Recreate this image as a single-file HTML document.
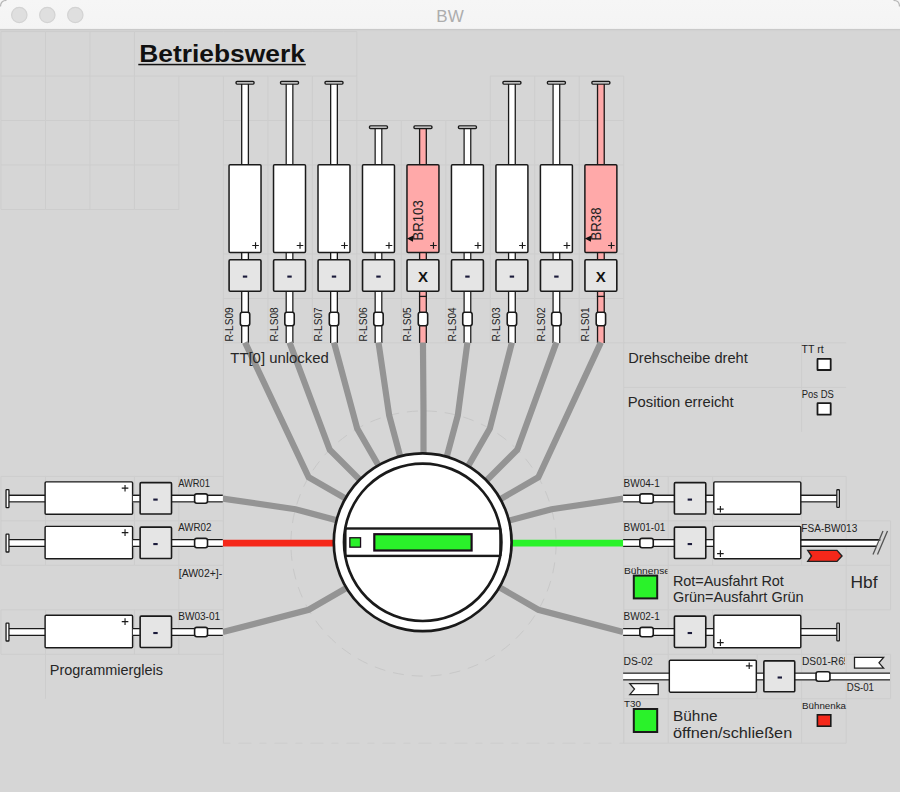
<!DOCTYPE html>
<html><head><meta charset="utf-8"><title>BW</title>
<style>html,body{margin:0;padding:0;background:#d6d6d6;width:900px;height:792px;overflow:hidden}svg{display:block;font-family:"Liberation Sans",sans-serif}</style>
</head><body>
<svg width="900" height="792" viewBox="0 0 900 792" font-family="Liberation Sans, sans-serif">
<rect x="0" y="0" width="900" height="792" fill="#d6d6d6"/>
<defs><linearGradient id="tb" x1="0" y1="0" x2="0" y2="1"><stop offset="0" stop-color="#f6f6f6"/><stop offset="1" stop-color="#f4f4f4"/></linearGradient></defs>
<rect x="0" y="0" width="900" height="29" fill="url(#tb)"/>
<rect x="0" y="28.9" width="900" height="1.3" fill="#c9c9c9"/>
<path d="M0.5 6.5Q0.5 0.5 6.5 0.5M893.5 0.5Q899.5 0.5 899.5 6.5" fill="none" stroke="#b8b8b8" stroke-width="1.2"/>
<rect x="0" y="30.2" width="900" height="1" fill="#d1d1d1"/>
<circle cx="19.3" cy="15" r="7.7" fill="#dfdfdf" stroke="#d3d3d3" stroke-width="1.2"/>
<circle cx="47.3" cy="15" r="7.7" fill="#dfdfdf" stroke="#d3d3d3" stroke-width="1.2"/>
<circle cx="75.3" cy="15" r="7.7" fill="#dfdfdf" stroke="#d3d3d3" stroke-width="1.2"/>
<text x="450" y="21.6" font-size="17" font-weight="normal" fill="#adadad" text-anchor="middle">BW</text>
<path d="M1 120.51H45.48M1 120.51V164.99M1 164.99H45.48M1 164.99V209.47M1 209.47H45.48M1 31.55H45.48M1 31.55V76.03M1 476.35H45.48M1 476.35V520.83M1 520.83H45.48M1 520.83V565.31M1 565.31H45.48M1 609.79H45.48M1 609.79V654.27M1 654.27H45.48M1 76.03H45.48M1 76.03V120.51M134.44 120.51H178.92M134.44 120.51V164.99M134.44 164.99H178.92M134.44 164.99V209.47M134.44 209.47H178.92M134.44 31.55H178.92M134.44 31.55V76.03M134.44 476.35H178.92M134.44 476.35V520.83M134.44 520.83H178.92M134.44 520.83V565.31M134.44 565.31H178.92M134.44 609.79H178.92M134.44 609.79V654.27M134.44 654.27H178.92M134.44 76.03H178.92M134.44 76.03V120.51M178.92 120.51V164.99M178.92 164.99V209.47M178.92 31.55H223.4M178.92 476.35H223.4M178.92 476.35V520.83M178.92 520.83H223.4M178.92 520.83V565.31M178.92 565.31H223.4M178.92 565.31V609.79M178.92 609.79H223.4M178.92 609.79V654.27M178.92 654.27H223.4M178.92 76.03H223.4M178.92 76.03V120.51M223.4 120.51H267.88M223.4 120.51V164.99M223.4 164.99H267.88M223.4 164.99V209.47M223.4 209.47V253.95M223.4 253.95H267.88M223.4 253.95V298.43M223.4 298.43H267.88M223.4 298.43V342.91M223.4 31.55H267.88M223.4 342.91H267.88M223.4 476.35V520.83M223.4 520.83V565.31M223.4 565.31V609.79M223.4 609.79V654.27M223.4 76.03H267.88M223.4 76.03V120.51M267.88 120.51H312.36M267.88 120.51V164.99M267.88 164.99H312.36M267.88 164.99V209.47M267.88 209.47V253.95M267.88 253.95H312.36M267.88 253.95V298.43M267.88 298.43H312.36M267.88 298.43V342.91M267.88 31.55H312.36M267.88 342.91H312.36M267.88 76.03H312.36M267.88 76.03V120.51M312.36 120.51H356.84M312.36 120.51V164.99M312.36 164.99H356.84M312.36 164.99V209.47M312.36 209.47V253.95M312.36 253.95H356.84M312.36 253.95V298.43M312.36 298.43H356.84M312.36 298.43V342.91M312.36 31.55H356.84M312.36 342.91H356.84M312.36 76.03H356.84M312.36 76.03V120.51M356.84 120.51H401.32M356.84 120.51V164.99M356.84 164.99H401.32M356.84 164.99V209.47M356.84 209.47V253.95M356.84 253.95H401.32M356.84 253.95V298.43M356.84 298.43H401.32M356.84 298.43V342.91M356.84 31.55V76.03M356.84 342.91H401.32M356.84 76.03V120.51M401.32 120.51H445.8M401.32 120.51V164.99M401.32 164.99H445.8M401.32 164.99V209.47M401.32 209.47V253.95M401.32 253.95H445.8M401.32 253.95V298.43M401.32 298.43H445.8M401.32 298.43V342.91M401.32 342.91H445.8M445.8 120.51H490.28M445.8 120.51V164.99M445.8 164.99H490.28M445.8 164.99V209.47M445.8 209.47V253.95M445.8 253.95H490.28M445.8 253.95V298.43M445.8 298.43H490.28M445.8 298.43V342.91M445.8 342.91H490.28M45.48 120.51H89.96M45.48 120.51V164.99M45.48 164.99H89.96M45.48 164.99V209.47M45.48 209.47H89.96M45.48 31.55H89.96M45.48 31.55V76.03M45.48 476.35H89.96M45.48 476.35V520.83M45.48 520.83H89.96M45.48 520.83V565.31M45.48 565.31H89.96M45.48 609.79H89.96M45.48 609.79V654.27M45.48 654.27H89.96M45.48 654.27V698.75M45.48 76.03H89.96M45.48 76.03V120.51M490.28 120.51H534.76M490.28 120.51V164.99M490.28 164.99H534.76M490.28 164.99V209.47M490.28 209.47V253.95M490.28 253.95H534.76M490.28 253.95V298.43M490.28 298.43H534.76M490.28 298.43V342.91M490.28 342.91H534.76M490.28 76.03H534.76M490.28 76.03V120.51M534.76 120.51H579.24M534.76 120.51V164.99M534.76 164.99H579.24M534.76 164.99V209.47M534.76 209.47V253.95M534.76 253.95H579.24M534.76 253.95V298.43M534.76 298.43H579.24M534.76 298.43V342.91M534.76 342.91H579.24M534.76 76.03H579.24M534.76 76.03V120.51M579.24 120.51H623.72M579.24 120.51V164.99M579.24 164.99H623.72M579.24 164.99V209.47M579.24 209.47V253.95M579.24 253.95H623.72M579.24 253.95V298.43M579.24 298.43H623.72M579.24 298.43V342.91M579.24 342.91H623.72M579.24 76.03H623.72M579.24 76.03V120.51M623.72 120.51V164.99M623.72 164.99V209.47M623.72 209.47V253.95M623.72 253.95V298.43M623.72 298.43V342.91M623.72 342.91H846.12M623.72 387.39H846.12M623.72 476.35H668.2M623.72 476.35V520.83M623.72 520.83H668.2M623.72 520.83V565.31M623.72 565.31H668.2M623.72 565.31V609.79M623.72 609.79H668.2M623.72 609.79V654.27M623.72 654.27H668.2M623.72 654.27V698.75M623.72 698.75H668.2M623.72 698.75V743.23M623.72 743.23H668.2M623.72 76.03V120.51M668.2 476.35H712.68M668.2 476.35V520.83M668.2 520.83H712.68M668.2 520.83V565.31M668.2 565.31H712.68M668.2 565.31V609.79M668.2 609.79H712.68M668.2 609.79V654.27M668.2 654.27H712.68M668.2 654.27V698.75M668.2 698.75H712.68M668.2 698.75V743.23M668.2 743.23H712.68M712.68 476.35H757.16M712.68 476.35V520.83M712.68 520.83H757.16M712.68 520.83V565.31M712.68 565.31H757.16M712.68 609.79H757.16M712.68 609.79V654.27M712.68 654.27H757.16M712.68 698.75H757.16M712.68 743.23H757.16M757.16 476.35H801.64M757.16 520.83H801.64M757.16 565.31H801.64M757.16 609.79H801.64M757.16 654.27H801.64M757.16 654.27V698.75M757.16 698.75H801.64M757.16 743.23H801.64M801.64 342.91V431.87M801.64 476.35H846.12M801.64 476.35V520.83M801.64 520.83H846.12M801.64 520.83V565.31M801.64 565.31H846.12M801.64 609.79H846.12M801.64 609.79V654.27M801.64 654.27H846.12M801.64 654.27V698.75M801.64 698.75H846.12M801.64 698.75V743.23M801.64 743.23H846.12M846.12 476.35V520.83M846.12 520.83H890.6M846.12 520.83V565.31M846.12 565.31H890.6M846.12 565.31V609.79M846.12 609.79H890.6M846.12 609.79V654.27M846.12 654.27H890.6M846.12 654.27V698.75M846.12 698.75H890.6M846.12 698.75V743.23M89.96 120.51H134.44M89.96 120.51V164.99M89.96 164.99H134.44M89.96 164.99V209.47M89.96 209.47H134.44M89.96 31.55H134.44M89.96 31.55V76.03M89.96 476.35H134.44M89.96 520.83H134.44M89.96 565.31H134.44M89.96 609.79H134.44M89.96 654.27H134.44M89.96 76.03H134.44M89.96 76.03V120.51M890.6 520.83V565.31M890.6 565.31V609.79M890.6 654.27V698.75" stroke="#cdcdcd" stroke-width="1" fill="none"/>
<path d="M223.4 298.43V743.23" stroke="#cdcdcd" stroke-width="1"/>
<path d="M623.72 342.91V743.23" stroke="#cdcdcd" stroke-width="1"/>
<path d="M223.4 743.23H623.72" stroke="#cdcdcd" stroke-width="1" stroke-dasharray="7 8 13 8" stroke-dashoffset="0"/>
<text x="139.3" y="62" font-size="24.2" font-weight="bold" fill="#111" textLength="165.5" lengthAdjust="spacingAndGlyphs">Betriebswerk</text>
<rect x="138.3" y="63.8" width="167.5" height="1.5" fill="#111"/>
<rect x="241.04" y="83.8" width="8" height="81.2" fill="#fff"/>
<path d="M241.69 83.8V165M248.39 83.8V165" stroke="#1a1a1a" stroke-width="1.3"/>
<rect x="236.04" y="81.5" width="18" height="2.6" rx="1" fill="#f4f4f4" stroke="#1a1a1a" stroke-width="1.4"/>
<rect x="241.04" y="252" width="8" height="8" fill="#fff"/>
<path d="M241.69 252V260M248.39 252V260" stroke="#1a1a1a" stroke-width="1.3"/>
<rect x="241.04" y="291" width="8" height="51.91" fill="#fff"/>
<path d="M241.69 291V342.91M248.39 291V342.91" stroke="#1a1a1a" stroke-width="1.3"/>
<rect x="229.05" y="164.75" width="31.98" height="87.7" rx="1.1" fill="#fff" stroke="#1a1a1a" stroke-width="1.5"/>
<path d="M252.24 245.5H258.84M255.54 242.2V248.8" stroke="#1a1a1a" stroke-width="1.15"/>
<rect x="229.1" y="259.8" width="31.88" height="31.4" rx="1.1" fill="#e5e5e5" stroke="#1a1a1a" stroke-width="1.6"/>
<rect x="242.84" y="275.55" width="4.4" height="2.1" fill="#1a1a3a"/>
<rect x="240.34" y="312.3" width="9.4" height="13.4" rx="2.2" fill="#fff" stroke="#1a1a1a" stroke-width="1.6"/>
<text transform="translate(233.3 341.6) rotate(-90)" font-size="10.2" fill="#222" textLength="34.2" lengthAdjust="spacingAndGlyphs">R-LS09</text>
<rect x="285.52" y="83.8" width="8" height="81.2" fill="#fff"/>
<path d="M286.17 83.8V165M292.87 83.8V165" stroke="#1a1a1a" stroke-width="1.3"/>
<rect x="280.52" y="81.5" width="18" height="2.6" rx="1" fill="#f4f4f4" stroke="#1a1a1a" stroke-width="1.4"/>
<rect x="285.52" y="252" width="8" height="8" fill="#fff"/>
<path d="M286.17 252V260M292.87 252V260" stroke="#1a1a1a" stroke-width="1.3"/>
<rect x="285.52" y="291" width="8" height="51.91" fill="#fff"/>
<path d="M286.17 291V342.91M292.87 291V342.91" stroke="#1a1a1a" stroke-width="1.3"/>
<rect x="273.53" y="164.75" width="31.98" height="87.7" rx="1.1" fill="#fff" stroke="#1a1a1a" stroke-width="1.5"/>
<path d="M296.72 245.5H303.32M300.02 242.2V248.8" stroke="#1a1a1a" stroke-width="1.15"/>
<rect x="273.58" y="259.8" width="31.88" height="31.4" rx="1.1" fill="#e5e5e5" stroke="#1a1a1a" stroke-width="1.6"/>
<rect x="287.32" y="275.55" width="4.4" height="2.1" fill="#1a1a3a"/>
<rect x="284.82" y="312.3" width="9.4" height="13.4" rx="2.2" fill="#fff" stroke="#1a1a1a" stroke-width="1.6"/>
<text transform="translate(277.78 341.6) rotate(-90)" font-size="10.2" fill="#222" textLength="34.2" lengthAdjust="spacingAndGlyphs">R-LS08</text>
<rect x="330" y="83.8" width="8" height="81.2" fill="#fff"/>
<path d="M330.65 83.8V165M337.35 83.8V165" stroke="#1a1a1a" stroke-width="1.3"/>
<rect x="325" y="81.5" width="18" height="2.6" rx="1" fill="#f4f4f4" stroke="#1a1a1a" stroke-width="1.4"/>
<rect x="330" y="252" width="8" height="8" fill="#fff"/>
<path d="M330.65 252V260M337.35 252V260" stroke="#1a1a1a" stroke-width="1.3"/>
<rect x="330" y="291" width="8" height="51.91" fill="#fff"/>
<path d="M330.65 291V342.91M337.35 291V342.91" stroke="#1a1a1a" stroke-width="1.3"/>
<rect x="318.01" y="164.75" width="31.98" height="87.7" rx="1.1" fill="#fff" stroke="#1a1a1a" stroke-width="1.5"/>
<path d="M341.2 245.5H347.8M344.5 242.2V248.8" stroke="#1a1a1a" stroke-width="1.15"/>
<rect x="318.06" y="259.8" width="31.88" height="31.4" rx="1.1" fill="#e5e5e5" stroke="#1a1a1a" stroke-width="1.6"/>
<rect x="331.8" y="275.55" width="4.4" height="2.1" fill="#1a1a3a"/>
<rect x="329.3" y="312.3" width="9.4" height="13.4" rx="2.2" fill="#fff" stroke="#1a1a1a" stroke-width="1.6"/>
<text transform="translate(322.26 341.6) rotate(-90)" font-size="10.2" fill="#222" textLength="34.2" lengthAdjust="spacingAndGlyphs">R-LS07</text>
<rect x="374.48" y="128.2" width="8" height="36.8" fill="#fff"/>
<path d="M375.13 128.2V165M381.83 128.2V165" stroke="#1a1a1a" stroke-width="1.3"/>
<rect x="369.48" y="125.9" width="18" height="2.6" rx="1" fill="#f4f4f4" stroke="#1a1a1a" stroke-width="1.4"/>
<rect x="374.48" y="252" width="8" height="8" fill="#fff"/>
<path d="M375.13 252V260M381.83 252V260" stroke="#1a1a1a" stroke-width="1.3"/>
<rect x="374.48" y="291" width="8" height="51.91" fill="#fff"/>
<path d="M375.13 291V342.91M381.83 291V342.91" stroke="#1a1a1a" stroke-width="1.3"/>
<rect x="362.49" y="164.75" width="31.98" height="87.7" rx="1.1" fill="#fff" stroke="#1a1a1a" stroke-width="1.5"/>
<path d="M385.68 245.5H392.28M388.98 242.2V248.8" stroke="#1a1a1a" stroke-width="1.15"/>
<rect x="362.54" y="259.8" width="31.88" height="31.4" rx="1.1" fill="#e5e5e5" stroke="#1a1a1a" stroke-width="1.6"/>
<rect x="376.28" y="275.55" width="4.4" height="2.1" fill="#1a1a3a"/>
<rect x="373.78" y="312.3" width="9.4" height="13.4" rx="2.2" fill="#fff" stroke="#1a1a1a" stroke-width="1.6"/>
<text transform="translate(366.74 341.6) rotate(-90)" font-size="10.2" fill="#222" textLength="34.2" lengthAdjust="spacingAndGlyphs">R-LS06</text>
<rect x="418.96" y="128.2" width="8" height="36.8" fill="#ffa9a9"/>
<path d="M419.61 128.2V165M426.31 128.2V165" stroke="#1a1a1a" stroke-width="1.3"/>
<rect x="413.96" y="125.9" width="18" height="2.6" rx="1" fill="#f4f4f4" stroke="#1a1a1a" stroke-width="1.4"/>
<rect x="418.96" y="252" width="8" height="8" fill="#ffa9a9"/>
<path d="M419.61 252V260M426.31 252V260" stroke="#1a1a1a" stroke-width="1.3"/>
<rect x="418.96" y="291" width="8" height="51.91" fill="#ffa9a9"/>
<path d="M419.61 291V342.91M426.31 291V342.91" stroke="#1a1a1a" stroke-width="1.3"/>
<rect x="406.97" y="164.75" width="31.98" height="87.7" rx="1.1" fill="#ffa9a9" stroke="#1a1a1a" stroke-width="1.5"/>
<path d="M430.16 245.5H436.76M433.46 242.2V248.8" stroke="#1a1a1a" stroke-width="1.15"/>
<rect x="407.02" y="259.8" width="31.88" height="31.4" rx="1.1" fill="#e5e5e5" stroke="#1a1a1a" stroke-width="1.6"/>
<text x="422.96" y="282" font-size="15" font-weight="bold" fill="#111" text-anchor="middle">X</text>
<path d="M418.96 296.4H426.96" stroke="#1a1a1a" stroke-width="1.3"/>
<rect x="418.26" y="312.3" width="9.4" height="13.4" rx="2.2" fill="#fff" stroke="#1a1a1a" stroke-width="1.6"/>
<text transform="translate(411.22 341.6) rotate(-90)" font-size="10.2" fill="#222" textLength="34.2" lengthAdjust="spacingAndGlyphs">R-LS05</text>
<text transform="translate(423.46 240.5) rotate(-90)" font-size="14.2" fill="#222" textLength="40.2" lengthAdjust="spacingAndGlyphs">BR103</text>
<path d="M406.96 238.5L413.46 235.5L412.96 241.8Z" fill="#111"/>
<rect x="463.44" y="128.2" width="8" height="36.8" fill="#fff"/>
<path d="M464.09 128.2V165M470.79 128.2V165" stroke="#1a1a1a" stroke-width="1.3"/>
<rect x="458.44" y="125.9" width="18" height="2.6" rx="1" fill="#f4f4f4" stroke="#1a1a1a" stroke-width="1.4"/>
<rect x="463.44" y="252" width="8" height="8" fill="#fff"/>
<path d="M464.09 252V260M470.79 252V260" stroke="#1a1a1a" stroke-width="1.3"/>
<rect x="463.44" y="291" width="8" height="51.91" fill="#fff"/>
<path d="M464.09 291V342.91M470.79 291V342.91" stroke="#1a1a1a" stroke-width="1.3"/>
<rect x="451.45" y="164.75" width="31.98" height="87.7" rx="1.1" fill="#fff" stroke="#1a1a1a" stroke-width="1.5"/>
<path d="M474.64 245.5H481.24M477.94 242.2V248.8" stroke="#1a1a1a" stroke-width="1.15"/>
<rect x="451.5" y="259.8" width="31.88" height="31.4" rx="1.1" fill="#e5e5e5" stroke="#1a1a1a" stroke-width="1.6"/>
<rect x="465.24" y="275.55" width="4.4" height="2.1" fill="#1a1a3a"/>
<rect x="462.74" y="312.3" width="9.4" height="13.4" rx="2.2" fill="#fff" stroke="#1a1a1a" stroke-width="1.6"/>
<text transform="translate(455.7 341.6) rotate(-90)" font-size="10.2" fill="#222" textLength="34.2" lengthAdjust="spacingAndGlyphs">R-LS04</text>
<rect x="507.92" y="83.8" width="8" height="81.2" fill="#fff"/>
<path d="M508.57 83.8V165M515.27 83.8V165" stroke="#1a1a1a" stroke-width="1.3"/>
<rect x="502.92" y="81.5" width="18" height="2.6" rx="1" fill="#f4f4f4" stroke="#1a1a1a" stroke-width="1.4"/>
<rect x="507.92" y="252" width="8" height="8" fill="#fff"/>
<path d="M508.57 252V260M515.27 252V260" stroke="#1a1a1a" stroke-width="1.3"/>
<rect x="507.92" y="291" width="8" height="51.91" fill="#fff"/>
<path d="M508.57 291V342.91M515.27 291V342.91" stroke="#1a1a1a" stroke-width="1.3"/>
<rect x="495.93" y="164.75" width="31.98" height="87.7" rx="1.1" fill="#fff" stroke="#1a1a1a" stroke-width="1.5"/>
<path d="M519.12 245.5H525.72M522.42 242.2V248.8" stroke="#1a1a1a" stroke-width="1.15"/>
<rect x="495.98" y="259.8" width="31.88" height="31.4" rx="1.1" fill="#e5e5e5" stroke="#1a1a1a" stroke-width="1.6"/>
<rect x="509.72" y="275.55" width="4.4" height="2.1" fill="#1a1a3a"/>
<rect x="507.22" y="312.3" width="9.4" height="13.4" rx="2.2" fill="#fff" stroke="#1a1a1a" stroke-width="1.6"/>
<text transform="translate(500.18 341.6) rotate(-90)" font-size="10.2" fill="#222" textLength="34.2" lengthAdjust="spacingAndGlyphs">R-LS03</text>
<rect x="552.4" y="83.8" width="8" height="81.2" fill="#fff"/>
<path d="M553.05 83.8V165M559.75 83.8V165" stroke="#1a1a1a" stroke-width="1.3"/>
<rect x="547.4" y="81.5" width="18" height="2.6" rx="1" fill="#f4f4f4" stroke="#1a1a1a" stroke-width="1.4"/>
<rect x="552.4" y="252" width="8" height="8" fill="#fff"/>
<path d="M553.05 252V260M559.75 252V260" stroke="#1a1a1a" stroke-width="1.3"/>
<rect x="552.4" y="291" width="8" height="51.91" fill="#fff"/>
<path d="M553.05 291V342.91M559.75 291V342.91" stroke="#1a1a1a" stroke-width="1.3"/>
<rect x="540.41" y="164.75" width="31.98" height="87.7" rx="1.1" fill="#fff" stroke="#1a1a1a" stroke-width="1.5"/>
<path d="M563.6 245.5H570.2M566.9 242.2V248.8" stroke="#1a1a1a" stroke-width="1.15"/>
<rect x="540.46" y="259.8" width="31.88" height="31.4" rx="1.1" fill="#e5e5e5" stroke="#1a1a1a" stroke-width="1.6"/>
<rect x="554.2" y="275.55" width="4.4" height="2.1" fill="#1a1a3a"/>
<rect x="551.7" y="312.3" width="9.4" height="13.4" rx="2.2" fill="#fff" stroke="#1a1a1a" stroke-width="1.6"/>
<text transform="translate(544.66 341.6) rotate(-90)" font-size="10.2" fill="#222" textLength="34.2" lengthAdjust="spacingAndGlyphs">R-LS02</text>
<rect x="596.88" y="83.8" width="8" height="81.2" fill="#ffa9a9"/>
<path d="M597.53 83.8V165M604.23 83.8V165" stroke="#1a1a1a" stroke-width="1.3"/>
<rect x="591.88" y="81.5" width="18" height="2.6" rx="1" fill="#f4f4f4" stroke="#1a1a1a" stroke-width="1.4"/>
<rect x="596.88" y="252" width="8" height="8" fill="#ffa9a9"/>
<path d="M597.53 252V260M604.23 252V260" stroke="#1a1a1a" stroke-width="1.3"/>
<rect x="596.88" y="291" width="8" height="51.91" fill="#ffa9a9"/>
<path d="M597.53 291V342.91M604.23 291V342.91" stroke="#1a1a1a" stroke-width="1.3"/>
<rect x="584.89" y="164.75" width="31.98" height="87.7" rx="1.1" fill="#ffa9a9" stroke="#1a1a1a" stroke-width="1.5"/>
<path d="M608.08 245.5H614.68M611.38 242.2V248.8" stroke="#1a1a1a" stroke-width="1.15"/>
<rect x="584.94" y="259.8" width="31.88" height="31.4" rx="1.1" fill="#e5e5e5" stroke="#1a1a1a" stroke-width="1.6"/>
<text x="600.88" y="282" font-size="15" font-weight="bold" fill="#111" text-anchor="middle">X</text>
<path d="M596.88 296.4H604.88" stroke="#1a1a1a" stroke-width="1.3"/>
<rect x="596.18" y="312.3" width="9.4" height="13.4" rx="2.2" fill="#fff" stroke="#1a1a1a" stroke-width="1.6"/>
<text transform="translate(589.14 341.6) rotate(-90)" font-size="10.2" fill="#222" textLength="34.2" lengthAdjust="spacingAndGlyphs">R-LS01</text>
<text transform="translate(601.38 240.5) rotate(-90)" font-size="14.2" fill="#222" textLength="33" lengthAdjust="spacingAndGlyphs">BR38</text>
<path d="M584.88 238.5L591.38 235.5L590.88 241.8Z" fill="#111"/>
<circle cx="423.5" cy="543.5" r="132.6" fill="none" stroke="#c8c8c8" stroke-width="1" stroke-dasharray="11 8"/>
<path d="M245.04 342.41L308.67 477.2L423.5 543.5M289.52 342.41L329.74 449.74L423.5 543.5M334 342.41L357.2 428.67L423.5 543.5M378.48 342.41L389.18 415.42L423.5 543.5M422.96 342.41L423.5 410.9L423.5 543.5M467.44 342.41L457.82 415.42L423.5 543.5M511.92 342.41L489.8 428.67L423.5 543.5M556.4 342.41L517.26 449.74L423.5 543.5M600.88 342.41L538.33 477.2L423.5 543.5M222.8 498.59L295.42 509.18L423.5 543.5M222.8 632.03L308.67 609.8L423.5 543.5M623.12 498.59L551.58 509.18L423.5 543.5M623.12 632.03L538.33 609.8L423.5 543.5" fill="none" stroke="#949494" stroke-width="6.2" stroke-linejoin="miter"/>
<path d="M222.8 543.2H422.7" stroke="#f5281a" stroke-width="6.8"/>
<path d="M422.7 543.2H623.12" stroke="#2af22a" stroke-width="6.8"/>
<text x="230.3" y="362.7" font-size="14.2" font-weight="normal" fill="#262626" textLength="98.4" lengthAdjust="spacingAndGlyphs">TT[0] unlocked</text>
<circle cx="422.7" cy="542.3" r="88.9" fill="#fff" stroke="#1a1a1a" stroke-width="2.7"/>
<clipPath id="tt"><circle cx="422.7" cy="542.3" r="78.7"/></clipPath>
<rect x="340" y="528.5" width="166" height="27.4" fill="#fff" stroke="#1a1a1a" stroke-width="2.4" clip-path="url(#tt)"/>
<path d="M345.4 528.5V555.9M500.4 528.5V555.9" stroke="#1a1a1a" stroke-width="2.3"/>
<circle cx="422.7" cy="542.3" r="78.7" fill="none" stroke="#1a1a1a" stroke-width="2.7"/>
<rect x="349.85" y="537.75" width="10.7" height="9.4" fill="#2af22a" stroke="#1a0a1a" stroke-width="1.3"/>
<rect x="374.3" y="534.2" width="97.3" height="16.3" fill="#2af22a" stroke="#1a0a1a" stroke-width="2.2"/>
<rect x="9" y="494.59" width="36.88" height="8" fill="#fff"/>
<path d="M9 495.24H45.88M9 501.94H45.88" stroke="#1a1a1a" stroke-width="1.3"/>
<rect x="6.05" y="489.64" width="2.9" height="17.9" rx="0.6" fill="#fff" stroke="#1a1a1a" stroke-width="1.3"/>
<rect x="45.1" y="481.88" width="87.51" height="32.43" rx="1.1" fill="#fff" stroke="#1a1a1a" stroke-width="1.45"/>
<path d="M121.74 488.19H128.34M125.04 484.89V491.49" stroke="#1a1a1a" stroke-width="1.15"/>
<rect x="132.84" y="494.59" width="7" height="8" fill="#fff"/>
<path d="M132.84 495.24H139.84M132.84 501.94H139.84" stroke="#1a1a1a" stroke-width="1.3"/>
<rect x="171" y="494.59" width="51.8" height="8" fill="#fff"/>
<path d="M171 495.24H222.8M171 501.94H222.8" stroke="#1a1a1a" stroke-width="1.3"/>
<rect x="140.14" y="482.65" width="31.38" height="31.38" rx="1.1" fill="#e5e5e5" stroke="#1a1a1a" stroke-width="1.6"/>
<rect x="153.28" y="498.54" width="4.4" height="2.1" fill="#1a1a3a"/>
<rect x="194.61" y="493.89" width="12.9" height="9.4" rx="2.2" fill="#fff" stroke="#1a1a1a" stroke-width="1.6"/>
<text x="178.2" y="486.95" font-size="10.2" font-weight="normal" fill="#222" textLength="31.8" lengthAdjust="spacingAndGlyphs">AWR01</text>
<rect x="9" y="539.07" width="36.88" height="8" fill="#fff"/>
<path d="M9 539.72H45.88M9 546.42H45.88" stroke="#1a1a1a" stroke-width="1.3"/>
<rect x="6.05" y="534.12" width="2.9" height="17.9" rx="0.6" fill="#fff" stroke="#1a1a1a" stroke-width="1.3"/>
<rect x="45.1" y="526.35" width="87.51" height="32.43" rx="1.1" fill="#fff" stroke="#1a1a1a" stroke-width="1.45"/>
<path d="M121.74 532.67H128.34M125.04 529.37V535.97" stroke="#1a1a1a" stroke-width="1.15"/>
<rect x="132.84" y="539.07" width="7" height="8" fill="#fff"/>
<path d="M132.84 539.72H139.84M132.84 546.42H139.84" stroke="#1a1a1a" stroke-width="1.3"/>
<rect x="171" y="539.07" width="51.8" height="8" fill="#fff"/>
<path d="M171 539.72H222.8M171 546.42H222.8" stroke="#1a1a1a" stroke-width="1.3"/>
<rect x="140.14" y="527.13" width="31.38" height="31.38" rx="1.1" fill="#e5e5e5" stroke="#1a1a1a" stroke-width="1.6"/>
<rect x="153.28" y="543.02" width="4.4" height="2.1" fill="#1a1a3a"/>
<rect x="194.61" y="538.37" width="12.9" height="9.4" rx="2.2" fill="#fff" stroke="#1a1a1a" stroke-width="1.6"/>
<text x="178.2" y="531.43" font-size="10.2" font-weight="normal" fill="#222" textLength="33.2" lengthAdjust="spacingAndGlyphs">AWR02</text>
<rect x="9" y="628.03" width="36.88" height="8" fill="#fff"/>
<path d="M9 628.68H45.88M9 635.38H45.88" stroke="#1a1a1a" stroke-width="1.3"/>
<rect x="6.05" y="623.08" width="2.9" height="17.9" rx="0.6" fill="#fff" stroke="#1a1a1a" stroke-width="1.3"/>
<rect x="45.1" y="615.31" width="87.51" height="32.43" rx="1.1" fill="#fff" stroke="#1a1a1a" stroke-width="1.45"/>
<path d="M121.74 621.63H128.34M125.04 618.33V624.93" stroke="#1a1a1a" stroke-width="1.15"/>
<rect x="132.84" y="628.03" width="7" height="8" fill="#fff"/>
<path d="M132.84 628.68H139.84M132.84 635.38H139.84" stroke="#1a1a1a" stroke-width="1.3"/>
<rect x="171" y="628.03" width="51.8" height="8" fill="#fff"/>
<path d="M171 628.68H222.8M171 635.38H222.8" stroke="#1a1a1a" stroke-width="1.3"/>
<rect x="140.14" y="616.09" width="31.38" height="31.38" rx="1.1" fill="#e5e5e5" stroke="#1a1a1a" stroke-width="1.6"/>
<rect x="153.28" y="631.98" width="4.4" height="2.1" fill="#1a1a3a"/>
<rect x="194.61" y="627.33" width="12.9" height="9.4" rx="2.2" fill="#fff" stroke="#1a1a1a" stroke-width="1.6"/>
<text x="178.2" y="620.39" font-size="10.2" font-weight="normal" fill="#222" textLength="42" lengthAdjust="spacingAndGlyphs">BW03-01</text>
<text x="178.8" y="576.6" font-size="10.2" font-weight="normal" fill="#222" textLength="43.4" lengthAdjust="spacingAndGlyphs">[AW02+]-</text>
<text x="49.8" y="674.6" font-size="14.2" font-weight="normal" fill="#262626" textLength="113.2" lengthAdjust="spacingAndGlyphs">Programmiergleis</text>
<rect x="623.12" y="494.59" width="51.48" height="8" fill="#fff"/>
<path d="M623.12 495.24H674.6M623.12 501.94H674.6" stroke="#1a1a1a" stroke-width="1.3"/>
<rect x="705.58" y="494.59" width="9" height="8" fill="#fff"/>
<path d="M705.58 495.24H714.58M705.58 501.94H714.58" stroke="#1a1a1a" stroke-width="1.3"/>
<rect x="639.86" y="493.89" width="13.4" height="9.4" rx="2.2" fill="#fff" stroke="#1a1a1a" stroke-width="1.6"/>
<rect x="674.4" y="482.65" width="31.38" height="31.38" rx="1.1" fill="#e5e5e5" stroke="#1a1a1a" stroke-width="1.6"/>
<rect x="687.64" y="498.54" width="4.4" height="2.1" fill="#1a1a3a"/>
<rect x="800.04" y="494.59" width="36.96" height="8" fill="#fff"/>
<path d="M800.04 495.24H837M800.04 501.94H837" stroke="#1a1a1a" stroke-width="1.3"/>
<rect x="836.85" y="489.74" width="2.5" height="17.7" rx="0.6" fill="#fff" stroke="#1a1a1a" stroke-width="1.3"/>
<rect x="713.8" y="481.88" width="87.01" height="32.43" rx="1.1" fill="#fff" stroke="#1a1a1a" stroke-width="1.45"/>
<path d="M717.08 509.19H723.68M720.38 505.89V512.49" stroke="#1a1a1a" stroke-width="1.15"/>
<text x="623.6" y="486.95" font-size="10.2" font-weight="normal" fill="#222" textLength="36.1" lengthAdjust="spacingAndGlyphs">BW04-1</text>
<rect x="623.12" y="539.07" width="51.48" height="8" fill="#fff"/>
<path d="M623.12 539.72H674.6M623.12 546.42H674.6" stroke="#1a1a1a" stroke-width="1.3"/>
<rect x="705.58" y="539.07" width="9" height="8" fill="#fff"/>
<path d="M705.58 539.72H714.58M705.58 546.42H714.58" stroke="#1a1a1a" stroke-width="1.3"/>
<rect x="639.86" y="538.37" width="13.4" height="9.4" rx="2.2" fill="#fff" stroke="#1a1a1a" stroke-width="1.6"/>
<rect x="674.4" y="527.13" width="31.38" height="31.38" rx="1.1" fill="#e5e5e5" stroke="#1a1a1a" stroke-width="1.6"/>
<rect x="687.64" y="543.02" width="4.4" height="2.1" fill="#1a1a3a"/>
<path d="M800.04 539.07H881L877 547.07H800.04Z" fill="#fff"/>
<path d="M800.04 539.87H880.4M800.04 546.27H876.6" stroke="#1a1a1a" stroke-width="1.6"/>
<path d="M873 554.5L883 531M877.5 554.5L887.5 531" stroke="#555" stroke-width="1.3"/>
<path d="M807.8 550.4H837L842 556L837 561.4H807.8L811.5 556Z" fill="#f5281a" stroke="#222" stroke-width="1.4" stroke-linejoin="miter"/>
<text x="801.3" y="531.6" font-size="10.2" font-weight="normal" fill="#222" textLength="56" lengthAdjust="spacingAndGlyphs">FSA-BW013</text>
<rect x="713.8" y="526.35" width="87.01" height="32.43" rx="1.1" fill="#fff" stroke="#1a1a1a" stroke-width="1.45"/>
<path d="M717.08 553.67H723.68M720.38 550.37V556.97" stroke="#1a1a1a" stroke-width="1.15"/>
<text x="623.6" y="531.43" font-size="10.2" font-weight="normal" fill="#222" textLength="41.7" lengthAdjust="spacingAndGlyphs">BW01-01</text>
<rect x="623.12" y="628.03" width="51.48" height="8" fill="#fff"/>
<path d="M623.12 628.68H674.6M623.12 635.38H674.6" stroke="#1a1a1a" stroke-width="1.3"/>
<rect x="705.58" y="628.03" width="9" height="8" fill="#fff"/>
<path d="M705.58 628.68H714.58M705.58 635.38H714.58" stroke="#1a1a1a" stroke-width="1.3"/>
<rect x="639.86" y="627.33" width="13.4" height="9.4" rx="2.2" fill="#fff" stroke="#1a1a1a" stroke-width="1.6"/>
<rect x="674.4" y="616.09" width="31.38" height="31.38" rx="1.1" fill="#e5e5e5" stroke="#1a1a1a" stroke-width="1.6"/>
<rect x="687.64" y="631.98" width="4.4" height="2.1" fill="#1a1a3a"/>
<rect x="800.04" y="628.03" width="36.96" height="8" fill="#fff"/>
<path d="M800.04 628.68H837M800.04 635.38H837" stroke="#1a1a1a" stroke-width="1.3"/>
<rect x="836.85" y="623.18" width="2.5" height="17.7" rx="0.6" fill="#fff" stroke="#1a1a1a" stroke-width="1.3"/>
<rect x="713.8" y="615.31" width="87.01" height="32.43" rx="1.1" fill="#fff" stroke="#1a1a1a" stroke-width="1.45"/>
<path d="M717.08 642.63H723.68M720.38 639.33V645.93" stroke="#1a1a1a" stroke-width="1.15"/>
<text x="623.6" y="620.39" font-size="10.2" font-weight="normal" fill="#222" textLength="36.1" lengthAdjust="spacingAndGlyphs">BW02-1</text>
<text x="628.2" y="363" font-size="14.2" font-weight="normal" fill="#262626" textLength="119.6" lengthAdjust="spacingAndGlyphs">Drehscheibe dreht</text>
<text x="627.7" y="407" font-size="14.2" font-weight="normal" fill="#262626" textLength="106" lengthAdjust="spacingAndGlyphs">Position erreicht</text>
<text x="801.6" y="353.3" font-size="10.2" font-weight="normal" fill="#222" textLength="22.2" lengthAdjust="spacingAndGlyphs">TT rt</text>
<text x="801.8" y="398" font-size="10.2" font-weight="normal" fill="#222" textLength="32" lengthAdjust="spacingAndGlyphs">Pos DS</text>
<rect x="817.5" y="358.9" width="13.2" height="11.1" rx="0.3" fill="#fff" stroke="#1a1a1a" stroke-width="1.8"/>
<rect x="817.5" y="403.1" width="13.2" height="11.6" rx="0.3" fill="#fff" stroke="#1a1a1a" stroke-width="1.8"/>
<clipPath id="c14"><rect x="623.12" y="565.31" width="44.48" height="44.48"/></clipPath>
<text x="623.9" y="574.4" font-size="9.4" font-weight="normal" fill="#222" textLength="66" lengthAdjust="spacingAndGlyphs" clip-path="url(#c14)">Bühnensensor</text>
<rect x="633.8" y="575.6" width="23.4" height="22.8" rx="0" fill="#2af22a" stroke="#1a1a1a" stroke-width="2"/>
<text x="672.9" y="585.5" font-size="14.2" font-weight="normal" fill="#262626" textLength="111" lengthAdjust="spacingAndGlyphs">Rot=Ausfahrt Rot</text>
<text x="672.9" y="601.6" font-size="14.2" font-weight="normal" fill="#262626" textLength="130.7" lengthAdjust="spacingAndGlyphs">Grün=Ausfahrt Grün</text>
<text x="850.6" y="588.2" font-size="17" font-weight="normal" fill="#262626" textLength="27" lengthAdjust="spacingAndGlyphs">Hbf</text>
<rect x="623.12" y="672.51" width="266.88" height="8" fill="#fff"/>
<path d="M623.12 673.16H890M623.12 679.86H890" stroke="#1a1a1a" stroke-width="1.3"/>
<rect x="669.32" y="660.19" width="87.01" height="32.03" rx="1.1" fill="#fff" stroke="#1a1a1a" stroke-width="1.45"/>
<path d="M745.9 665.8H752.5M749.2 662.5V669.1" stroke="#1a1a1a" stroke-width="1.15"/>
<rect x="763.86" y="660.87" width="30.88" height="30.88" rx="1.1" fill="#e5e5e5" stroke="#1a1a1a" stroke-width="1.6"/>
<rect x="777.6" y="676.46" width="4.4" height="2.1" fill="#1a1a3a"/>
<rect x="816.05" y="671.81" width="13.9" height="9.4" rx="2.2" fill="#fff" stroke="#1a1a1a" stroke-width="1.6"/>
<text x="623.5" y="665" font-size="10.2" font-weight="normal" fill="#222" textLength="29.2" lengthAdjust="spacingAndGlyphs">DS-02</text>
<clipPath id="c18"><rect x="801.04" y="654.27" width="43.98" height="44.48"/></clipPath>
<text x="802" y="665" font-size="10.2" font-weight="normal" fill="#222" textLength="47.5" lengthAdjust="spacingAndGlyphs" clip-path="url(#c18)">DS01-R65</text>
<text x="846.7" y="690.8" font-size="10.2" font-weight="normal" fill="#222" textLength="27.3" lengthAdjust="spacingAndGlyphs">DS-01</text>
<path d="M629.8 683.6H658.2V694.6H629.8L634.5 689.1Z" fill="#fff" stroke="#222" stroke-width="1.3"/>
<path d="M854.5 657.4H883.6L879 662.8L883.6 668.2H854.5Z" fill="#fff" stroke="#222" stroke-width="1.3"/>
<text x="623.9" y="707.3" font-size="9.4" font-weight="normal" fill="#222" textLength="17" lengthAdjust="spacingAndGlyphs">T30</text>
<rect x="633.8" y="709" width="23.4" height="23" rx="0" fill="#2af22a" stroke="#1a1a1a" stroke-width="2"/>
<text x="673" y="720.5" font-size="14.2" font-weight="normal" fill="#262626" textLength="44.5" lengthAdjust="spacingAndGlyphs">Bühne</text>
<text x="673" y="738" font-size="14.2" font-weight="normal" fill="#262626" textLength="119.2" lengthAdjust="spacingAndGlyphs">öffnen/schließen</text>
<text x="802" y="709.2" font-size="9.4" font-weight="normal" fill="#222" textLength="44" lengthAdjust="spacingAndGlyphs">Bühnenka</text>
<rect x="817.4" y="714.8" width="13.4" height="11.4" rx="0" fill="#f5281a" stroke="#1a1a1a" stroke-width="1.6"/>
</svg>
</body></html>
